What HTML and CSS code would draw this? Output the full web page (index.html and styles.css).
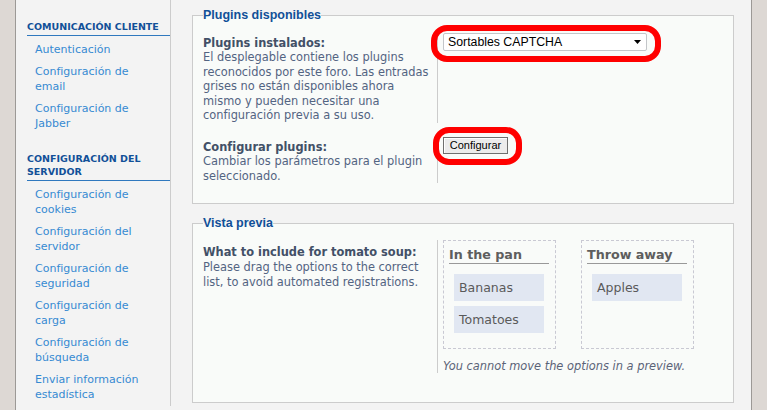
FILE: index.html
```html
<!DOCTYPE html>
<html lang="es">
<head>
<meta charset="utf-8">
<title>Plugins disponibles</title>
<link rel="stylesheet" href="styles.css">
</head>
<body>
<div class="page">
  <nav class="sidebar">
    <div class="menu-block">
      <p class="menu-head">Comunicación cliente</p>
      <ul class="menu-list">
        <li><a href="#">Autenticación</a></li>
        <li><a href="#">Configuración de email</a></li>
        <li><a href="#">Configuración de Jabber</a></li>
      </ul>
    </div>
    <div class="menu-block">
      <p class="menu-head">Configuración del servidor</p>
      <ul class="menu-list">
        <li><a href="#">Configuración de cookies</a></li>
        <li><a href="#">Configuración del servidor</a></li>
        <li><a href="#">Configuración de seguridad</a></li>
        <li><a href="#">Configuración de carga</a></li>
        <li><a href="#">Configuración de búsqueda</a></li>
        <li><a href="#">Enviar información estadística</a></li>
      </ul>
    </div>
  </nav>

  <main class="main">
    <fieldset class="panel">
      <legend>Plugins disponibles</legend>
      <dl class="row">
        <dt>
          <label class="row-label">Plugins instalados:</label>
          <span class="row-desc">El desplegable contiene los plugins reconocidos por este foro. Las entradas grises no están disponibles ahora mismo y pueden necesitar una configuración previa a su uso.</span>
        </dt>
        <dd>
          <span class="anchor">
            <span class="select">
              <span>Sortables CAPTCHA</span>
              <svg class="arrow" width="7" height="4" viewBox="0 0 7 4"><path d="M0 0H7L3.5 4Z" fill="#000"/></svg>
            </span>
            <span class="ring ring-select"></span>
          </span>
        </dd>
      </dl>
      <dl class="row row-next">
        <dt>
          <label class="row-label">Configurar plugins:</label>
          <span class="row-desc">Cambiar los parámetros para el plugin seleccionado.</span>
        </dt>
        <dd>
          <span class="anchor">
            <button class="button" type="button">Configurar</button>
            <span class="ring ring-button"></span>
          </span>
        </dd>
      </dl>
    </fieldset>

    <fieldset class="panel panel-preview">
      <legend>Vista previa</legend>
      <dl class="row">
        <dt class="dt-low">
          <label class="row-label">What to include for tomato soup:</label>
          <span class="row-desc">Please drag the options to the correct list, to avoid automated registrations.</span>
        </dt>
        <dd>
          <div class="sortables">
            <div class="sort-box">
              <h4 class="sort-head">In the pan</h4>
              <ul class="sort-list">
                <li>Bananas</li>
                <li>Tomatoes</li>
              </ul>
            </div>
            <div class="sort-box">
              <h4 class="sort-head">Throw away</h4>
              <ul class="sort-list">
                <li>Apples</li>
              </ul>
            </div>
          </div>
          <p class="note">You cannot move the options in a preview.</p>
        </dd>
      </dl>
    </fieldset>
  </main>
</div>
</body>
</html>
```

FILE: styles.css
```css
html, body {
  margin: 0;
  height: 100%;
  overflow: hidden;
}

body {
  background: #ddd8d4;
  font-family: "DejaVu Sans", Verdana, sans-serif;
  color: #536482;
}

.page {
  margin: 0 15px;
  min-height: 410px;
  background: #f3f3f3;
  border-left: 1px solid #9c9996;
  border-right: 1px solid #9c9996;
  display: flex;
  align-items: flex-start;
}

/* Sidebar */
.sidebar {
  flex: none;
  width: 154px;
  border-right: 1px solid #cccccc;
  padding-top: 20px;
}

.menu-block + .menu-block {
  margin-top: 17px;
}

.menu-head {
  margin: 0 0 0 11px;
  padding-bottom: 2px;
  border-bottom: 1px solid #2f78be;
  font-size: 9.5px;
  line-height: 13px;
  font-weight: bold;
  text-transform: uppercase;
  color: #115098;
}

.menu-list {
  list-style: none;
  margin: 0;
  padding: 3px 0 0;
}

.menu-list a {
  display: block;
  padding: 3px 10px 4px 19px;
  font-size: 11px;
  line-height: 15px;
  color: #368ad2;
  text-decoration: none;
}

/* Main */
.main {
  flex: 1;
  min-width: 0;
  padding: 8px 17px 0 21px;
}

.panel {
  margin: 0;
  padding: 10px 10px 20px;
  border: 1px solid #cccccc;
  background: #f9fbf9;
}

.panel legend {
  padding: 0;
  font-family: "Liberation Sans", Arial, sans-serif;
  font-size: 12.5px;
  line-height: 15px;
  font-weight: bold;
  color: #115098;
}

.panel-preview {
  margin-top: 12px;
  padding-top: 9px;
  padding-bottom: 29px;
}

.row {
  display: flex;
  margin: 0;
}

.row-next {
  margin-top: 14px;
}

.row dt {
  box-sizing: border-box;
  width: 234px;
  flex: none;
  padding: 2.5px 5px 0 0;
  font-size: 11.4px;
  line-height: 14.6px;
}

.row dt.dt-low {
  padding-top: 5px;
}

.row-label {
  display: block;
  font-weight: bold;
  color: #425067;
}

.row-desc {
  display: block;
  color: #536482;
}

.row dd {
  flex: 1;
  margin: 0;
  padding-left: 5px;
  border-left: 1px solid #cccccc;
}

/* Controls */
.anchor {
  position: relative;
  display: inline-block;
  vertical-align: top;
}

.select {
  box-sizing: border-box;
  width: 204px;
  height: 18px;
  padding: 0 5px 0 4px;
  border: 1px solid #c3c6c9;
  border-radius: 2px;
  background: #ffffff;
  display: flex;
  align-items: center;
  justify-content: space-between;
  font-family: "Liberation Sans", Arial, sans-serif;
  font-size: 12.3px;
  color: #000000;
}

.arrow {
  display: block;
}

.button {
  display: block;
  box-sizing: border-box;
  width: 65px;
  height: 17px;
  padding: 0;
  border: 1px solid #6f6f6f;
  background: #ececec;
  box-shadow: inset 1px 1px 0 #ffffff;
  font-family: "Liberation Sans", Arial, sans-serif;
  font-size: 11px;
  line-height: 15px;
  color: #000000;
}

.ring {
  position: absolute;
  border: 6px solid #ff0000;
  border-radius: 16px;
  pointer-events: none;
}

.ring-select {
  top: -8px;
  left: -12px;
  right: -14px;
  bottom: -11px;
}

.ring-button {
  top: -10px;
  left: -10px;
  right: -14px;
  bottom: -11px;
}

/* Sortables preview */
.sortables {
  display: flex;
  gap: 25px;
}

.sort-box {
  box-sizing: border-box;
  width: 113px;
  padding: 6px 6px 15px 5px;
  border: 1px dashed #c9c9d3;
}

.sort-head {
  margin: 0;
  font-size: 12.7px;
  line-height: 16px;
  font-weight: bold;
  color: #5e5e5e;
  border-bottom: 1px solid #999999;
}

.sort-list {
  list-style: none;
  margin: 10px 0 0 5px;
  padding: 0;
}

.sort-list li {
  box-sizing: border-box;
  width: 90px;
  height: 27px;
  padding-left: 5px;
  background: #e1e7f2;
  font-size: 12.5px;
  line-height: 27px;
  color: #5a5a5a;
}

.sort-list li + li {
  margin-top: 5px;
}

.note {
  margin: 9.5px 0 0;
  font-size: 11.4px;
  line-height: 14.6px;
  font-style: italic;
  color: #5b6378;
}
```
